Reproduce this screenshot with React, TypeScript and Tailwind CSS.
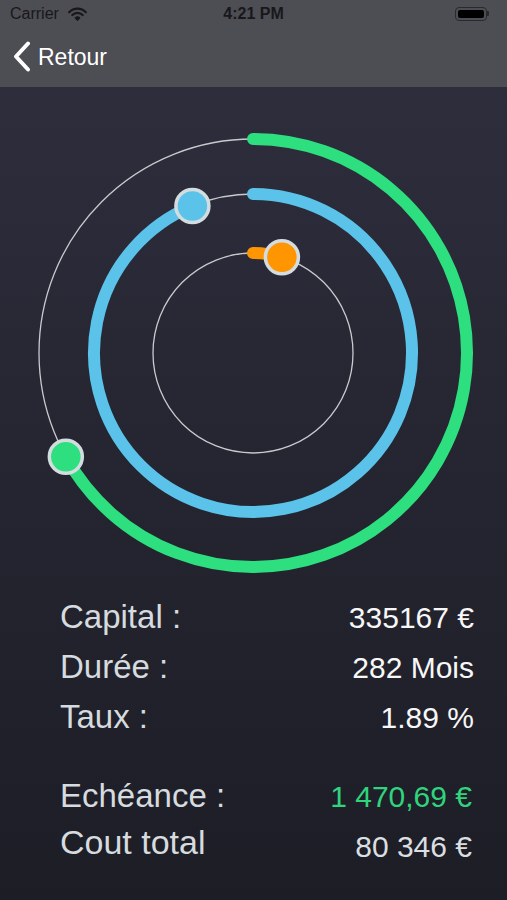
import React from 'react';

const CX = 253;
const CY = 353;

// arc from 12 o'clock, clockwise, to `deg`
const arcPath = (r: number, deg: number) => {
  const a = (deg * Math.PI) / 180;
  const x = CX + r * Math.sin(a);
  const y = CY - r * Math.cos(a);
  const large = deg > 180 ? 1 : 0;
  return `M ${CX} ${CY - r} A ${r} ${r} 0 ${large} 1 ${x.toFixed(2)} ${y.toFixed(2)}`;
};

const knobPos = (r: number, deg: number) => {
  const a = (deg * Math.PI) / 180;
  return { x: CX + r * Math.sin(a), y: CY - r * Math.cos(a) };
};

const rings = [
  { r: 214, deg: 241, color: '#2ddf7e' },
  { r: 159, deg: 337.6, color: '#5bc3e9' },
  { r: 100, deg: 16.8, color: '#ff9500' },
];

const Dial = () => (
  <svg width={507} height={505} viewBox="0 87 507 505" className="block">
    {rings.map((ring) => (
      <circle
        key={`t${ring.r}`}
        cx={CX}
        cy={CY}
        r={ring.r}
        fill="none"
        stroke="#c9c9ce"
        strokeWidth={1.3}
      />
    ))}
    {rings.map((ring) => (
      <path
        key={`a${ring.r}`}
        d={arcPath(ring.r, ring.deg)}
        fill="none"
        stroke={ring.color}
        strokeWidth={12}
        strokeLinecap="round"
      />
    ))}
    {rings.map((ring) => {
      const p = knobPos(ring.r, ring.deg);
      return (
        <circle
          key={`k${ring.r}`}
          cx={p.x}
          cy={p.y}
          r={16.5}
          fill={ring.color}
          stroke="#d3dcdf"
          strokeWidth={3.5}
        />
      );
    })}
  </svg>
);

const rows = [
  { label: 'Capital :', value: '335167 €' },
  { label: 'Durée :', value: '282 Mois' },
  { label: 'Taux :', value: '1.89 %' },
];

export default function App() {
  return (
    <div className="w-[507px] h-[900px] flex flex-col overflow-hidden font-['Liberation_Sans',Arial,sans-serif]">
      {/* status bar */}
      <div className="h-[27px] bg-[#4d4d54] flex items-center px-[10px] text-[#18181b] relative">
        <div className="flex items-center gap-[9px]">
          <span className="text-[16px] leading-none">Carrier</span>
          <svg width="19" height="14" viewBox="0 0 19 14">
            <path d="M1.2 5.2 A11.5 11.5 0 0 1 17.8 5.2" fill="none" stroke="#18181b" strokeWidth="2.2" strokeLinecap="round" />
            <path d="M4.3 8.1 A7.2 7.2 0 0 1 14.7 8.1" fill="none" stroke="#18181b" strokeWidth="2.2" strokeLinecap="round" />
            <path d="M7.2 10.9 A3.2 3.2 0 0 1 11.8 10.9 L9.5 13.3 Z" fill="#18181b" stroke="#18181b" strokeWidth="1.2" strokeLinejoin="round" />
          </svg>
        </div>
        <span className="absolute left-0 right-0 text-center text-[16px] font-semibold leading-none pointer-events-none">
          4:21 PM
        </span>
        <div className="ml-auto flex items-center mr-[8px]">
          <div className="w-[32px] h-[14px] rounded-[4px] border border-[#2a2a2e] p-[2px]">
            <div className="w-full h-full rounded-[2px] bg-black" />
          </div>
          <div className="w-[2px] h-[5px] rounded-r-[1px] bg-[#2a2a2e]" />
        </div>
      </div>

      {/* nav bar */}
      <div className="h-[60px] bg-[#4d4d54] flex items-center pl-[12px]">
        <svg width="20" height="32" viewBox="0 0 20 32" className="mt-[-1px]">
          <path d="M16 2.5 L4 15.5 L16 28.5" fill="none" stroke="#ffffff" strokeWidth="4" strokeLinecap="round" strokeLinejoin="round" />
        </svg>
        <span className="ml-[6px] text-[23px] text-white leading-none">Retour</span>
      </div>

      {/* content */}
      <div className="flex-1 bg-linear-to-b from-[#2d2d3c] to-[#1d1d26]">
        <Dial />
        <div className="pl-[60px] pr-[33px]">
          {rows.map((row) => (
            <div key={row.label} className="h-[50px] flex items-baseline justify-between">
              <span className="text-[33px] leading-[50px] text-[#d5dbde]">{row.label}</span>
              <span className="text-[30px] leading-[50px] text-[#f7f7f7]">{row.value}</span>
            </div>
          ))}
          <div className="h-[47px] mt-[30px] flex items-baseline justify-between">
            <span className="text-[33px] leading-[47px] text-[#d5dbde]">Echéance :</span>
            <span className="text-[30px] leading-[47px] text-[#2fd47c] mr-[2px]">1 470,69 €</span>
          </div>
          <div className="h-[47px] flex items-start justify-between">
            <span className="text-[34px] leading-[47px] text-[#d5dbde]">Cout total</span>
            <span className="text-[30px] leading-[47px] mt-[4px] text-[#dadfe2] mr-[2px]">80 346 €</span>
          </div>
        </div>
      </div>
    </div>
  );
}
